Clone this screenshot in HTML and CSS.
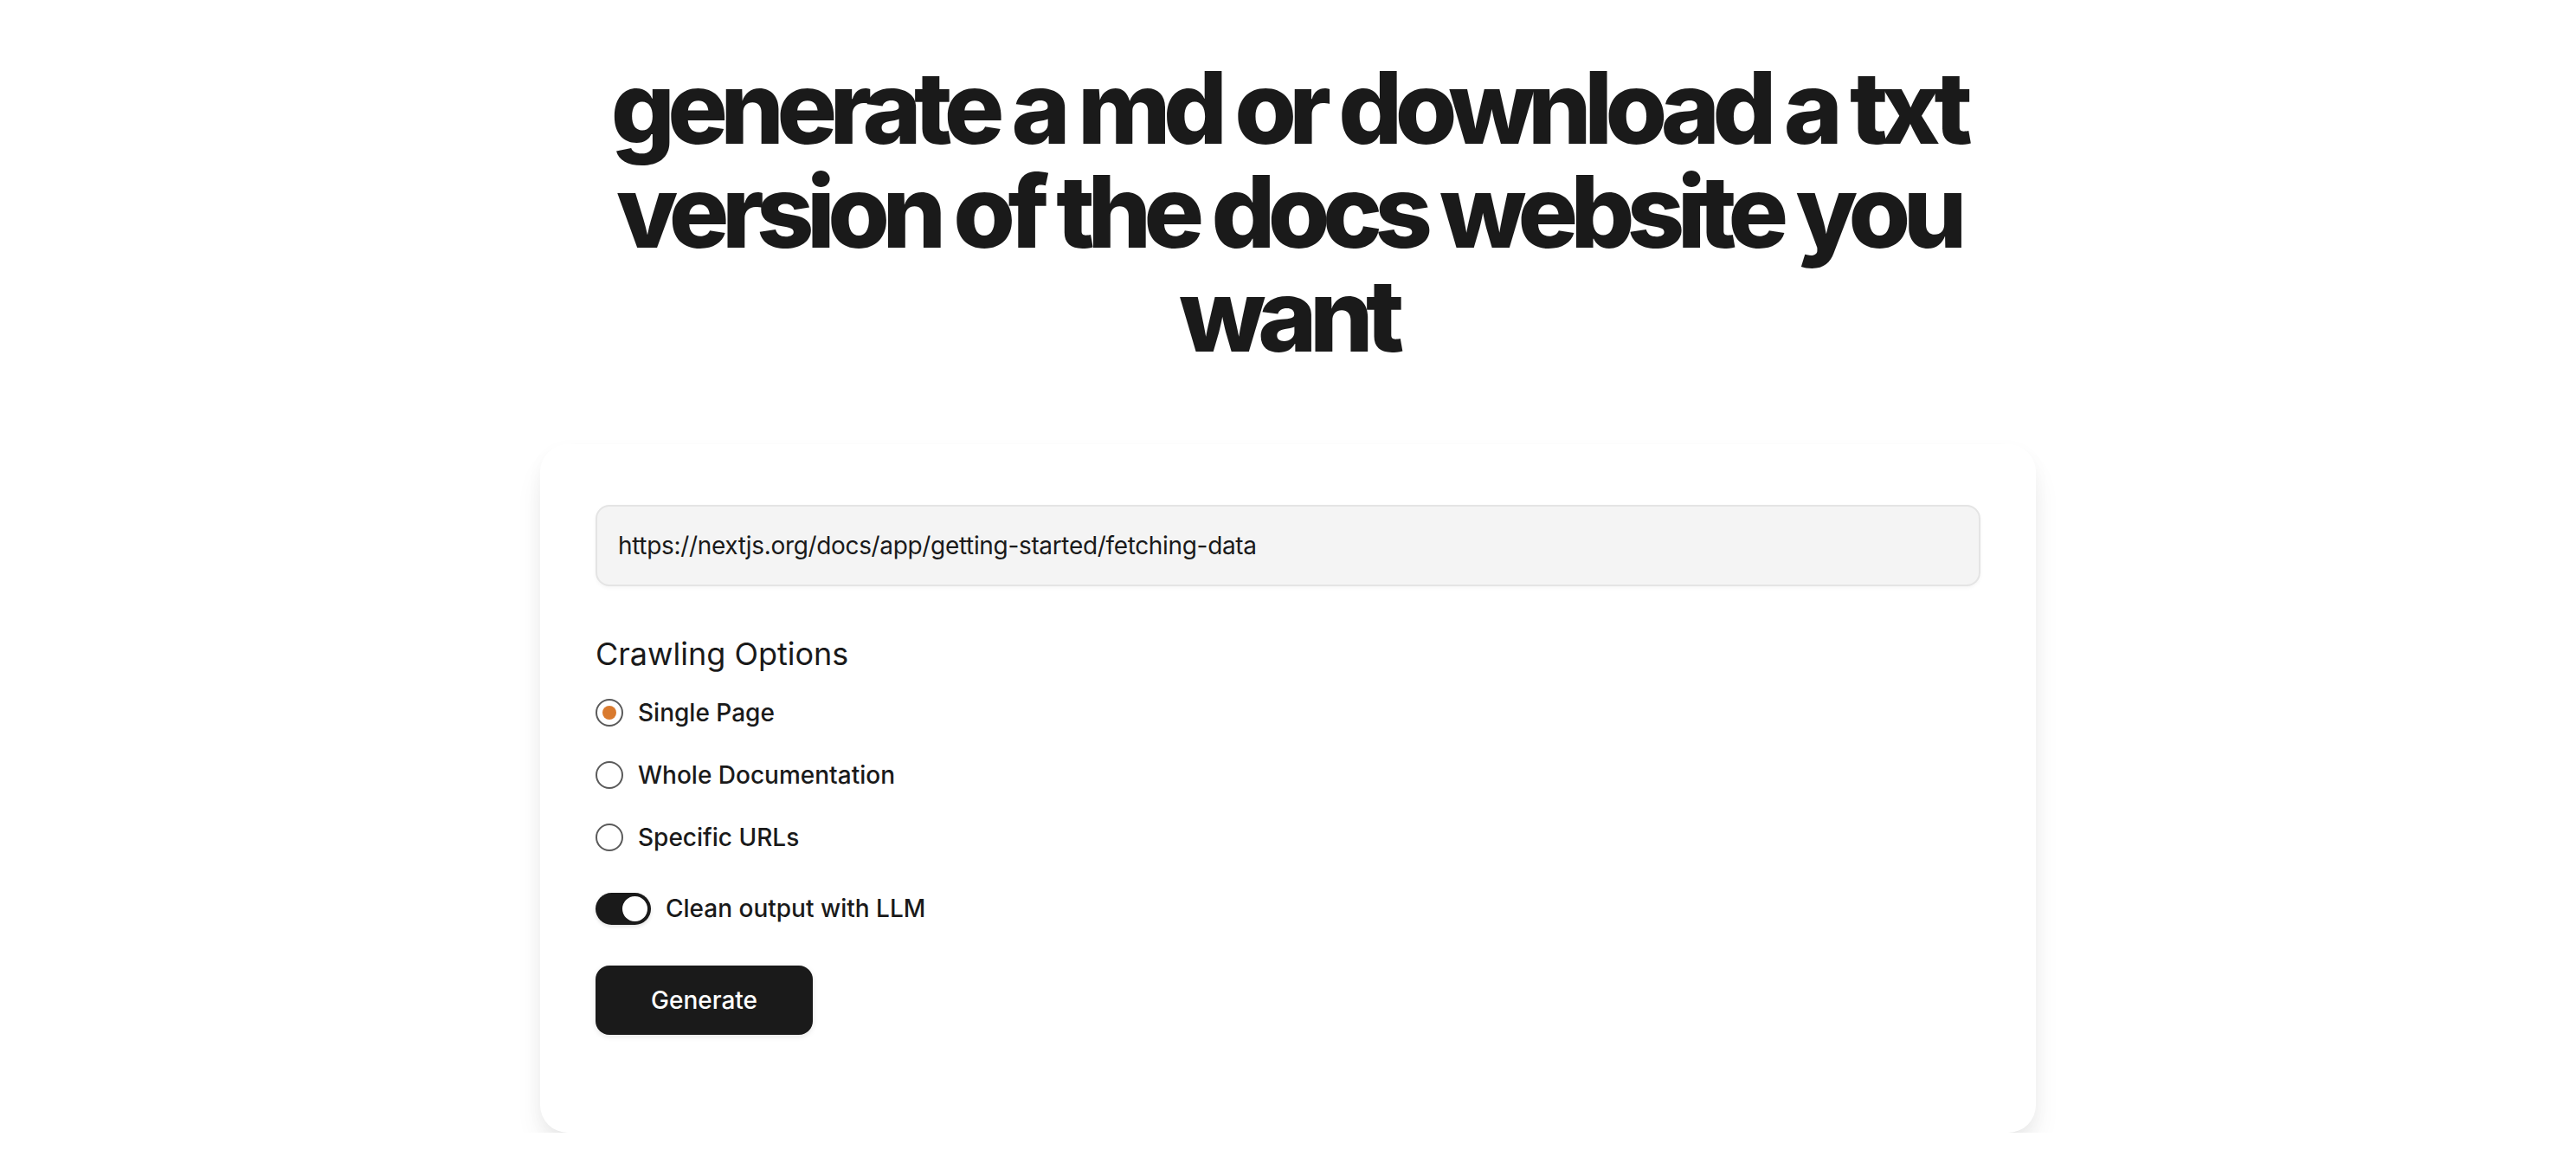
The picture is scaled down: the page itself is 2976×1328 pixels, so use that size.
FILE: index.html
```html
<!DOCTYPE html>
<html lang="en">
<head>
<meta charset="utf-8">
<title>Docs to md / txt</title>
<link rel="stylesheet" href="styles.css">
</head>
<body>
<main class="page">
  <h1 class="title">generate a md or download a txt version of the docs website you want</h1>
  <section class="card">
    <div class="url-input">https://nextjs.org/docs/app/getting-started/fetching-data</div>
    <h2 class="section-title">Crawling Options</h2>
    <div class="options">
      <label class="option">
        <span class="radio checked"><span class="dot"></span></span>
        <span class="option-label">Single Page</span>
      </label>
      <label class="option">
        <span class="radio"></span>
        <span class="option-label">Whole Documentation</span>
      </label>
      <label class="option">
        <span class="radio"></span>
        <span class="option-label">Specific URLs</span>
      </label>
    </div>
    <div class="toggle-row">
      <span class="toggle"><span class="knob"></span></span>
      <span class="option-label">Clean output with LLM</span>
    </div>
    <button class="generate">Generate</button>
  </section>
</main>
</body>
</html>
```

FILE: styles.css
```css
* { box-sizing: border-box; }
html, body { margin: 0; padding: 0; background: #ffffff; }
body {
  font-family: Inter, "Noto Sans", sans-serif;
  color: #1a1a1a;
  overflow: hidden;
}
.page {
  display: flex;
  flex-direction: column;
  align-items: center;
  padding-top: 64px;
}
.title {
  margin: 0 0 89px 0;
  width: 1728px;
  text-align: center;
  font-size: 116px;
  line-height: 120px;
  font-weight: 800;
  letter-spacing: -0.074em;
  color: #1a1a1a;
}
.card {
  width: 1728px;
  background: #ffffff;
  border-radius: 32px;
  padding: 70px 64px 113px 64px;
  box-shadow: 0 22px 36px -8px rgba(0,0,0,0.11), 0 6px 20px rgba(0,0,0,0.03);
  display: flex;
  flex-direction: column;
  align-items: flex-start;
}
.url-input {
  width: 100%;
  height: 94px;
  background: #f4f4f4;
  border: 2px solid #e4e4e4;
  border-radius: 16px;
  padding: 0 24px;
  display: flex;
  align-items: center;
  font-size: 28px;
  letter-spacing: -0.012em;
  color: #1a1a1a;
  box-shadow: 0 2px 4px rgba(0,0,0,0.04);
}
.section-title {
  margin: 50px 0 20px 0;
  font-size: 36px;
  line-height: 56px;
  font-weight: 400;
}
.options {
  display: flex;
  flex-direction: column;
  gap: 32px;
}
.option, .toggle-row {
  display: flex;
  align-items: center;
  gap: 17px;
  height: 40px;
}
.option-label {
  font-size: 28px;
  line-height: 40px;
  font-weight: 500;
}
.radio {
  width: 32px;
  height: 32px;
  border-radius: 50%;
  border: 2.5px solid #5a5a5a;
  display: flex;
  align-items: center;
  justify-content: center;
}
.radio .dot {
  width: 16px;
  height: 16px;
  border-radius: 50%;
  background: #d97a2e;
}
.toggle-row {
  margin-top: 42px;
  gap: 17px;
}
.toggle {
  width: 64px;
  height: 37px;
  border-radius: 19px;
  background: #1a1a1a;
  display: flex;
  align-items: center;
  justify-content: flex-end;
  padding: 2px;
  box-shadow: 0 2px 4px rgba(0,0,0,0.12);
}
.knob {
  width: 33px;
  height: 33px;
  border-radius: 50%;
  background: #ffffff;
  border: 2px solid #1a1a1a;
}
.generate {
  margin-top: 46px;
  height: 80px;
  padding: 0 64px;
  background: #1a1a1a;
  color: #ffffff;
  border: none;
  border-radius: 16px;
  font-family: Inter, "Noto Sans", sans-serif;
  font-size: 28px;
  font-weight: 500;
  box-shadow: 0 2px 6px rgba(0,0,0,0.10);
}
```
